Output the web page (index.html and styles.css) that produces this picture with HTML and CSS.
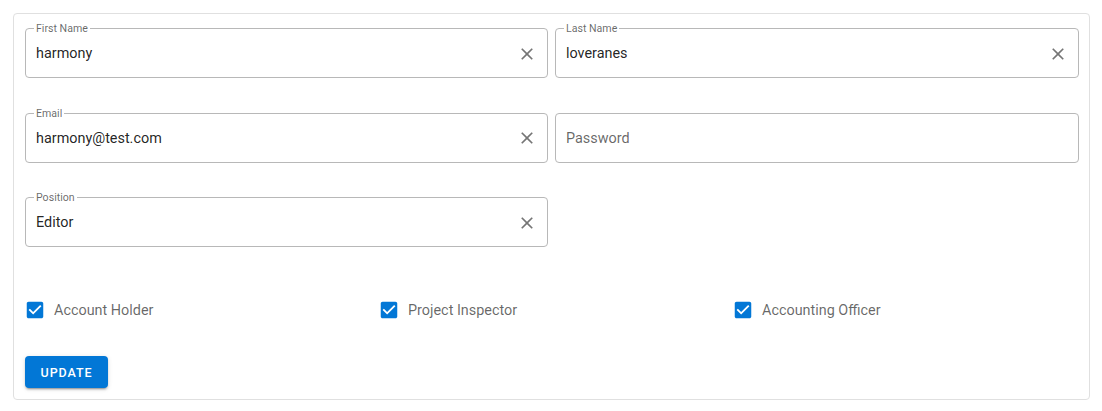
FILE: index.html
```html
<!DOCTYPE html>
<html>
<head>
<meta charset="utf-8">
<link rel="stylesheet" href="styles.css">
</head>
<body>
<form class="card">
  <div class="fields">
    <fieldset class="field">
      <legend class="label">First Name</legend>
      <div class="control">
        <input class="input" value="harmony">
        <svg class="clear" viewBox="0 0 24 24"><path d="M19 6.41 17.59 5 12 10.59 6.41 5 5 6.41 10.59 12 5 17.59 6.41 19 12 13.41 17.59 19 19 17.59 13.41 12z"/></svg>
      </div>
    </fieldset>
    <fieldset class="field">
      <legend class="label">Last Name</legend>
      <div class="control">
        <input class="input" value="loveranes">
        <svg class="clear" viewBox="0 0 24 24"><path d="M19 6.41 17.59 5 12 10.59 6.41 5 5 6.41 10.59 12 5 17.59 6.41 19 12 13.41 17.59 19 19 17.59 13.41 12z"/></svg>
      </div>
    </fieldset>
    <fieldset class="field">
      <legend class="label">Email</legend>
      <div class="control">
        <input class="input" value="harmony@test.com">
        <svg class="clear" viewBox="0 0 24 24"><path d="M19 6.41 17.59 5 12 10.59 6.41 5 5 6.41 10.59 12 5 17.59 6.41 19 12 13.41 17.59 19 19 17.59 13.41 12z"/></svg>
      </div>
    </fieldset>
    <fieldset class="field">
      <legend class="label label-empty"></legend>
      <div class="control">
        <input class="input" type="password" placeholder="Password">
      </div>
    </fieldset>
    <fieldset class="field">
      <legend class="label">Position</legend>
      <div class="control">
        <input class="input" value="Editor">
        <svg class="clear" viewBox="0 0 24 24"><path d="M19 6.41 17.59 5 12 10.59 6.41 5 5 6.41 10.59 12 5 17.59 6.41 19 12 13.41 17.59 19 19 17.59 13.41 12z"/></svg>
      </div>
    </fieldset>
  </div>
  <div class="checks">
    <label class="check">
      <svg class="box" viewBox="0 0 24 24"><path d="M19 3H5c-1.11 0-2 .9-2 2v14c0 1.1.89 2 2 2h14c1.11 0 2-.9 2-2V5c0-1.1-.89-2-2-2zm-9 14l-5-5 1.41-1.41L10 14.17l7.59-7.59L19 8l-9 9z"/></svg>
      <span class="check-text">Account Holder</span>
    </label>
    <label class="check">
      <svg class="box" viewBox="0 0 24 24"><path d="M19 3H5c-1.11 0-2 .9-2 2v14c0 1.1.89 2 2 2h14c1.11 0 2-.9 2-2V5c0-1.1-.89-2-2-2zm-9 14l-5-5 1.41-1.41L10 14.17l7.59-7.59L19 8l-9 9z"/></svg>
      <span class="check-text">Project Inspector</span>
    </label>
    <label class="check">
      <svg class="box" viewBox="0 0 24 24"><path d="M19 3H5c-1.11 0-2 .9-2 2v14c0 1.1.89 2 2 2h14c1.11 0 2-.9 2-2V5c0-1.1-.89-2-2-2zm-9 14l-5-5 1.41-1.41L10 14.17l7.59-7.59L19 8l-9 9z"/></svg>
      <span class="check-text">Accounting Officer</span>
    </label>
  </div>
  <div class="actions">
    <button type="button" class="btn">Update</button>
  </div>
</form>
</body>
</html>
```

FILE: styles.css
```css
* { box-sizing: border-box; }
html, body { margin: 0; padding: 0; background: #fff; }
body {
  font-family: Roboto, "Noto Sans", "Liberation Sans", sans-serif;
  color: rgba(0,0,0,0.87);
}
.card {
  margin: 13px 12px 0 13px;
  width: 1077px;
  border: 1px solid #e0e0e0;
  border-radius: 4px;
  padding: 8px 10px 11px 11px;
}
.fields {
  display: grid;
  grid-template-columns: 523px 524px;
  column-gap: 7px;
  row-gap: 28.5px;
}
.field {
  margin: 0;
  min-width: 0;
  height: 56px;
  padding: 0 10px 5px 8px;
  border: 1px solid #b8b8b8;
  border-radius: 4px;
}
.label {
  padding: 1px 2px 0;
  font-size: 10.6px;
  line-height: 12px;
  color: rgba(0,0,0,0.6);
}
.label-empty {
  padding: 0;
  width: 0;
  height: 13px;
}
.control {
  display: flex;
  align-items: center;
  height: 37px;
}
.input {
  flex: 1;
  min-width: 0;
  height: 37px;
  border: 0;
  outline: 0;
  padding: 0 0 0 2px;
  margin: 0;
  background: transparent;
  font-family: inherit;
  font-size: 14.4px;
  color: rgba(0,0,0,0.87);
}
.input::placeholder { color: rgba(0,0,0,0.6); opacity: 1; }
.clear {
  width: 20px;
  height: 20px;
  fill: #757575;
  flex: none;
}
.checks {
  display: grid;
  grid-template-columns: repeat(3, 1fr);
  column-gap: 8px;
  margin-top: 42px;
  height: 42px;
}
.check {
  display: flex;
  align-items: center;
  gap: 8px;
  margin-left: -1px;
}
.box {
  width: 22px;
  height: 22px;
  fill: #0277d6;
  flex: none;
}
.check-text {
  font-size: 14.4px;
  color: rgba(0,0,0,0.6);
}
.actions {
  margin-top: 25px;
}
.btn {
  display: block;
  width: 83px;
  height: 32px;
  border: 0;
  border-radius: 4px;
  background: #0277d6;
  color: #fff;
  font-family: inherit;
  font-size: 12.5px;
  font-weight: 500;
  letter-spacing: 0.9px;
  text-transform: uppercase;
  padding: 0;
  box-shadow: 0 3px 1px -2px rgba(0,0,0,0.2), 0 2px 2px 0 rgba(0,0,0,0.14), 0 1px 5px 0 rgba(0,0,0,0.12);
}
```
